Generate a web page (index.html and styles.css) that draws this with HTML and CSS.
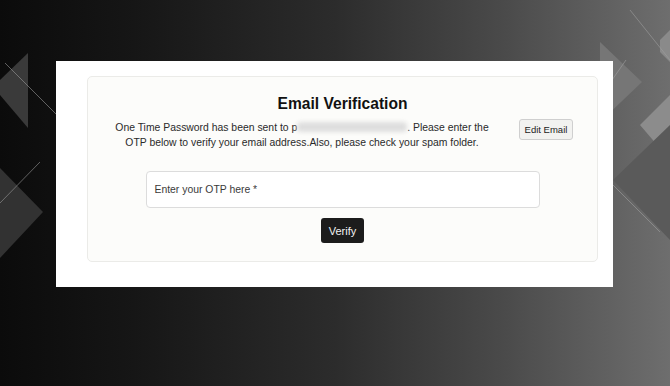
FILE: index.html
```html
<!DOCTYPE html>
<html>
<head>
<meta charset="utf-8">
<link rel="stylesheet" href="styles.css">
</head>
<body>
<div class="stage">
  <svg class="deco" width="670" height="386" viewBox="0 0 670 386">
    <polygon points="28,53 28,128 0,95 0,80" fill="#3a3a3a"/>
    <line x1="5" y1="63" x2="56" y2="114" stroke="#9a9a9a" stroke-width="0.6"/>
    <polygon points="0,168 43,212 0,258" fill="#323232"/>
    <line x1="0" y1="203" x2="40" y2="162" stroke="#9a9a9a" stroke-width="0.6"/>
    <polygon points="600,42 642,82 600,122" fill="#767676"/>
    <polygon points="660,40 670,30 670,62 660,52" fill="#8a8a8a"/>
    <polygon points="640,125 670,95 670,160" fill="#8c8c8c"/>
    <polygon points="613,180 670,125 670,240" fill="#5a5a5a"/>
    <line x1="613" y1="185" x2="660" y2="232" stroke="#a0a0a0" stroke-width="0.6"/>
    <line x1="630" y1="10" x2="670" y2="60" stroke="#a0a0a0" stroke-width="0.6"/>
    <line x1="605" y1="90" x2="626" y2="60" stroke="#a0a0a0" stroke-width="0.6"/>
  </svg>
  <div class="panel">
    <div class="card">
      <h1 class="title">Email Verification</h1>
      <div class="info-row">
        <p class="info">One Time Password has been sent to p<span class="blur"></span>. Please enter the OTP below to verify your email address.Also, please check your spam folder.</p>
        <button class="edit-btn">Edit Email</button>
      </div>
      <div class="otp-field">Enter your OTP here *</div>
      <button class="verify-btn">Verify</button>
    </div>
  </div>
</div>
</body>
</html>
```
FILE: styles.css
```css
html, body {
  margin: 0;
  padding: 0;
}
body {
  font-family: "Liberation Sans", Arial, sans-serif;
  width: 670px;
  height: 386px;
  overflow: hidden;
}
.stage {
  position: relative;
  width: 670px;
  height: 386px;
  background: linear-gradient(to right, #0b0b0b 0%, #161616 20%, #2c2c2c 50%, #4a4a4a 75%, #6e6e6e 100%);
  padding-top: 61px;
  padding-left: 56px;
  box-sizing: border-box;
}
.deco {
  position: absolute;
  left: 0;
  top: 0;
}
.panel {
  position: relative;
  width: 557px;
  height: 226px;
  background: #ffffff;
  box-sizing: border-box;
  padding: 15px 15px 25px 31px;
}
.card {
  width: 511px;
  height: 186px;
  box-sizing: border-box;
  background: #fcfcfa;
  border: 1px solid #ebebe8;
  border-radius: 5px;
  display: flex;
  flex-direction: column;
  align-items: center;
  padding-top: 17px;
}
.title {
  margin: 0;
  font-size: 15.6px;
  line-height: 19px;
  font-weight: bold;
  color: #111;
}
.info-row {
  align-self: stretch;
  display: flex;
  align-items: flex-start;
  margin-top: 7px;
  padding-left: 19px;
}
.info {
  margin: 0;
  width: 390px;
  text-align: center;
  font-size: 10.4px;
  line-height: 15px;
  color: #2a2a2a;
}
.blur {
  display: inline-block;
  width: 110px;
  height: 10px;
  vertical-align: -1px;
  background: #dedede;
  filter: blur(2px);
  border-radius: 4px;
}
.edit-btn {
  margin-left: 22px;
  margin-top: -1px;
  width: 54px;
  height: 21px;
  padding: 0;
  font-family: "Liberation Sans", Arial, sans-serif;
  font-size: 9.5px;
  color: #222;
  background: #f2f2f0;
  border: 1px solid #cfcfcf;
  border-radius: 3px;
}
.otp-field {
  margin-top: 21px;
  width: 394px;
  height: 37px;
  box-sizing: border-box;
  background: #fff;
  border: 1px solid #dcdcdc;
  border-radius: 4px;
  padding-left: 8px;
  display: flex;
  align-items: center;
  font-size: 10.4px;
  color: #3a3a3a;
}
.verify-btn {
  margin-top: 10px;
  width: 43px;
  height: 25px;
  padding: 0;
  font-family: "Liberation Sans", Arial, sans-serif;
  font-size: 11px;
  color: #f2f2f2;
  background: #1c1c1c;
  border: none;
  border-radius: 3px;
}
```
